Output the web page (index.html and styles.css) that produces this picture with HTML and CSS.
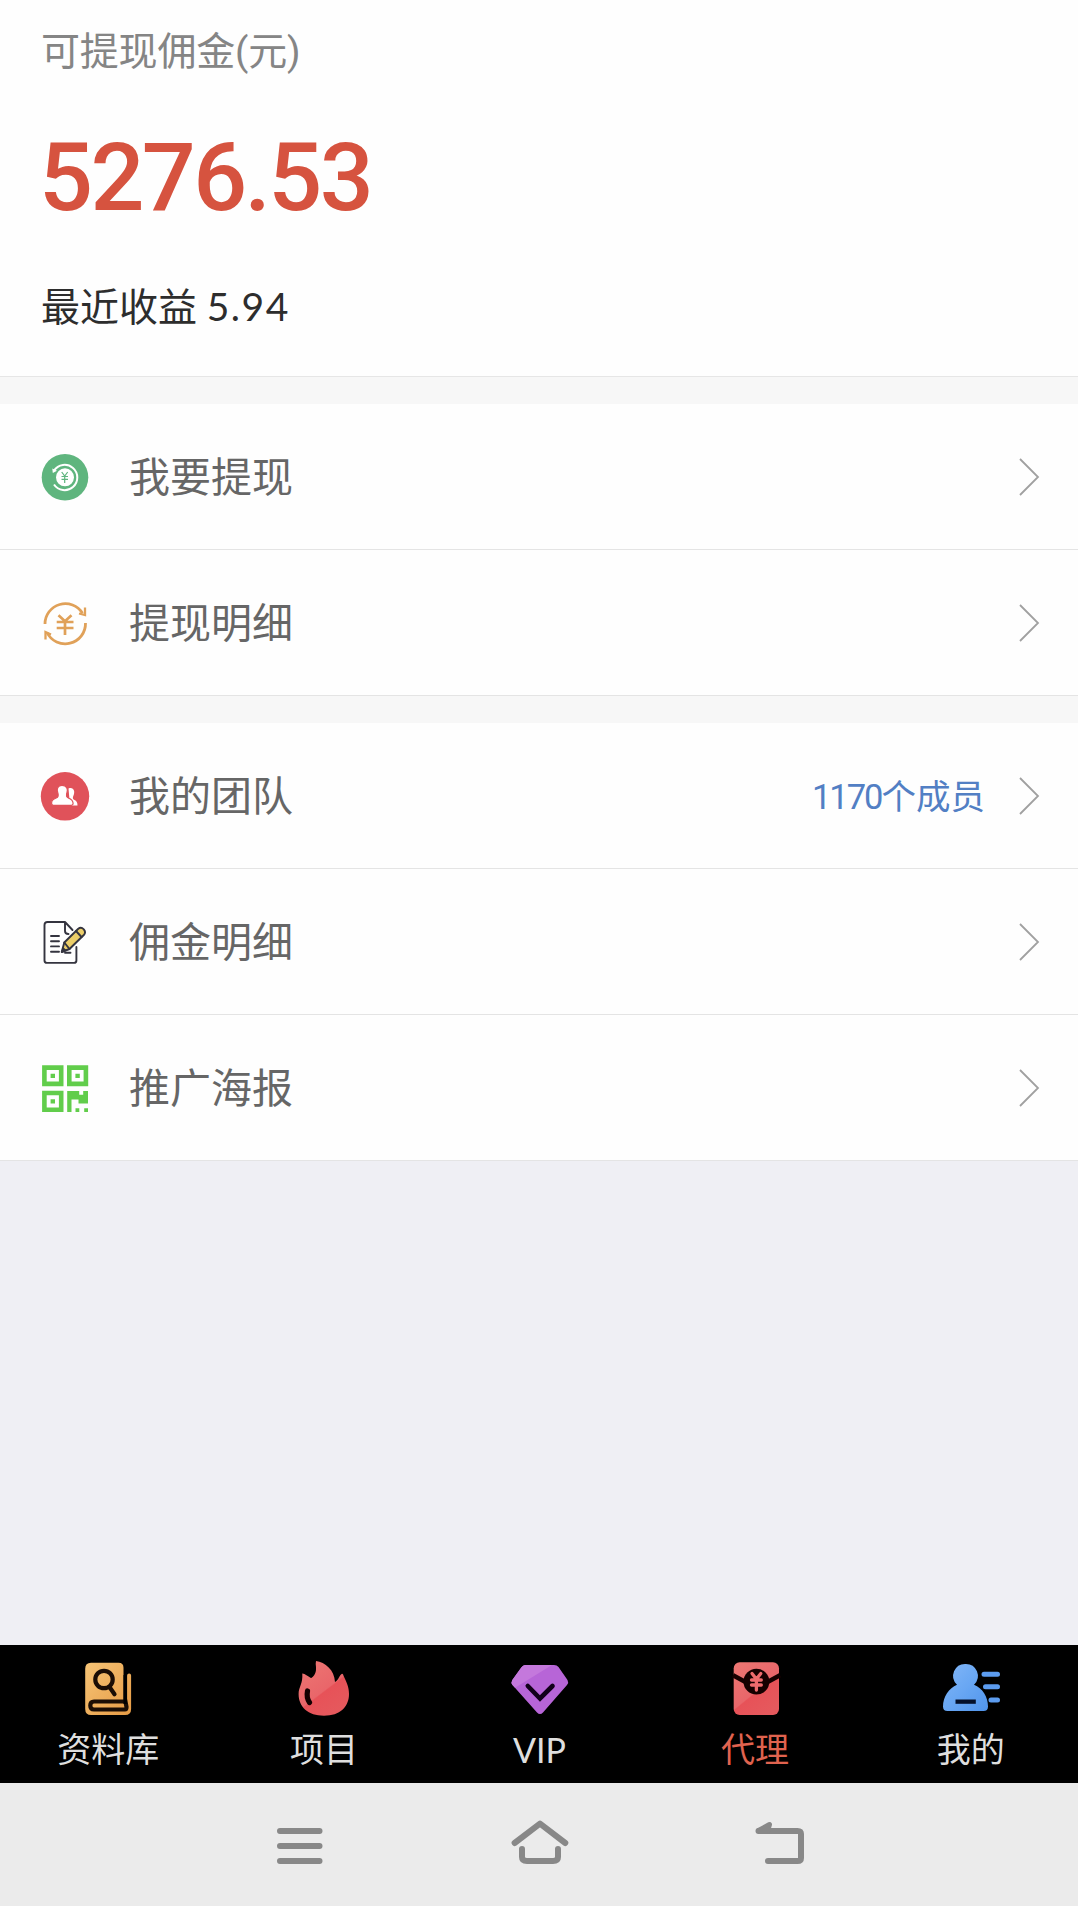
FILE: index.html
```html
<!DOCTYPE html>
<html lang="zh-CN">
  <head>
    <meta charset="UTF-8" />
    <meta name="viewport" content="width=device-width, initial-scale=1.0" />
    <title>代理</title>
    <link rel="stylesheet" href="styles.css">
  </head>
  <body>
    <main class="page">
      <section class="balance">
        <p class="balance-title">可提现佣金(元)</p>
        <p class="balance-amount">5276.53</p>
        <p class="balance-recent">最近收益 <span class="number">5.94</span></p>
      </section>

      <ul class="menu">
        <li class="menu-item">
          <svg class="menu-icon" viewBox="0 0 48 48">
            <circle cx="24" cy="24.3" r="23.3" fill="#5fb57e" />
            <path d="M13 17.500A12.700 12.700 0 1 1 13 31.500" fill="none" stroke="#fff" stroke-width="2" />
            <path d="M11.3 15.500l.5 4.500 4.200-2.200" fill="#fff" />
            <circle cx="24" cy="24.3" r="9" fill="#fff" />
            <path d="M20.7 19l3 4 3-4M23.7 23v7M20.5 23.5h6.5M20.5 26.3h6.5" fill="none" stroke="#5fb57e" stroke-width="1.2" />
          </svg>
          <span class="menu-label">我要提现</span>
          <svg class="chevron" viewBox="0 0 20 38"><path d="M1 1l18 18L1 37" /></svg>
        </li>
        <li class="menu-item">
          <svg class="menu-icon" viewBox="0 0 48 48">
            <g fill="none" stroke="#e0a159" stroke-width="2.8">
              <path d="M4 25A20.300 20.300 0 0 1 41.500 14.200M44.500 24A20.300 20.300 0 0 1 6 33.500" />
              <path d="M44 8.500v7.500l-6-1.500M4.500 40.500V33l5.500 2.500" stroke-width="2.300" />
              <path d="M17.500 16.200l6.500 6 6.500-6M24 22v14M15.7 23h16.8M15.7 29h16.8" stroke-width="2.700" />
            </g>
          </svg>
          <span class="menu-label">提现明细</span>
          <svg class="chevron" viewBox="0 0 20 38"><path d="M1 1l18 18L1 37" /></svg>
        </li>
      </ul>

      <ul class="menu">
        <li class="menu-item">
          <svg class="menu-icon" viewBox="0 0 48 48">
            <circle cx="24" cy="24.300" r="24.2" fill="#e0525a" />
            <path d="M27.500 16.500c5-2 7 3 5 7-1 2-1 3.500 1 4.500 2 1 3 2.500 3 5.500H29z" fill="#fff" />
            <path d="M21 13.300c-4.500 0-5.500 4-4.300 7.200.9 2.500 1.200 4.500-1.500 5.500-3.500 1.200-4.900 2.500-4.600 5.500.1 1 .5 1.500 1.500 1.800h18.500c1-.3 1.500-.8 1.500-1.800 0-3-1.600-4.300-4.800-5.500-2.500-1-2.200-3-1.300-5.500 1.200-3.200-.3-7.200-5-7.200z" fill="#fff" stroke="#e0525a" stroke-width="1.200" />
          </svg>
          <span class="menu-label">我的团队</span>
          <span class="menu-value"><span class="count">1170</span>个成员</span>
          <svg class="chevron" viewBox="0 0 20 38"><path d="M1 1l18 18L1 37" /></svg>
        </li>
        <li class="menu-item">
          <svg class="menu-icon" viewBox="0 0 48 48">
            <g fill="none" stroke="#34343f" stroke-width="1.900" stroke-linecap="round" stroke-linejoin="round">
              <path d="M31.500 12L24 4H6.500Q3.500 4 3.500 7v35.500q0 2.400 2.500 2.400h27q2.400 0 2.400-2.400V29M24 4v9q0 3 3.500 3" />
              <path d="M10 18h8M10 23.300h8M10 28.400h8M10 33.700h8M24 34.800h5.500" />
              <path d="M20.700 34l2.600-9.500L37 11q3-2.500 5.800.3 2.500 3 0 5.700L28.500 31z" fill="#ecce68" />
              <path d="M23.300 24.500l5.200 6.500M35 13l5.500 6M21 34l1.200-3.500 2.300 2z" />
            </g>
          </svg>
          <span class="menu-label">佣金明细</span>
          <svg class="chevron" viewBox="0 0 20 38"><path d="M1 1l18 18L1 37" /></svg>
        </li>
        <li class="menu-item">
          <svg class="menu-icon" viewBox="0 0 48 48">
            <g fill="none" stroke="#61cd4b" stroke-width="4.600">
              <path d="M3.400 3.600h16.800v16.300H3.400zM28.300 3.600h16.600v16.300H28.300zM3.400 29h16.800v16.800H3.400z" />
            </g>
            <path d="M9.600 9.700h4.400v4.400H9.600zM34.400 9.700h4.400v4.400h-4.400zM9.600 35.200h4.400v4.400H9.600zM26.200 27h12v3.800h4V27H47v12.500H37.500v-4h-7V48h-4.300zM34.500 44.200h3.800V48h-3.800zM43.200 44.200H47V48h-3.800z" fill="#61cd4b" />
          </svg>
          <span class="menu-label">推广海报</span>
          <svg class="chevron" viewBox="0 0 20 38"><path d="M1 1l18 18L1 37" /></svg>
        </li>
      </ul>
    </main>

    <nav class="tabbar">
      <a class="tab">
        <svg class="tab-icon" viewBox="0 0 60 60">
          <defs>
            <linearGradient id="gold" x1="0" y1="0" x2="1" y2="1">
              <stop offset="0" stop-color="#f6c476" />
              <stop offset="1" stop-color="#e69b45" />
            </linearGradient>
          </defs>
          <path d="M13 4.700h27.500q5 0 5 5V42h3.600V17.500q0-2 2-2t2 2V51q0 6-6 6H13.200q-6 0-6-6V10.700q0-6 5.800-6z" fill="url(#gold)" />
          <g fill="none" stroke="#1a0d05" stroke-width="4.200" stroke-linecap="round">
            <circle cx="26" cy="21.500" r="8.700" />
            <path d="M31.500 29l5 7.300" />
            <path d="M47.500 43.500H16q-3.700 0-3.700 4t3.700 4h31q1.500 0 1.500-2.500z" />
          </g>
          <path d="M45.500 17h3.500v29h-3.500z" fill="#000" />
        </svg>
        <span class="tab-label">资料库</span>
      </a>
      <a class="tab">
        <svg class="tab-icon" viewBox="0 0 60 60">
          <defs>
            <linearGradient id="red" x1="0" y1="0" x2=".7" y2="1">
              <stop offset="0" stop-color="#ed7773" />
              <stop offset=".6" stop-color="#e9666a" />
              <stop offset=".62" stop-color="#e75258" />
              <stop offset="1" stop-color="#e5595d" />
            </linearGradient>
          </defs>
          <path d="M23 3c9 1 18.500 9 19 21 3.500-1.500 4-6.500 7-8.200 1.300.2 1.300 1.500 2 3 2.500 5.500 5 10 5 17.200C56 49 47 57.700 31 57.700S5.600 49 5.600 36c0-7 4.400-10 3.700-20.500 1.500-.5 7 3.700 9 4.500 5-3.500 5.200-8 4.400-14z" fill="url(#red)" />
          <path d="M14.500 33c-1 5 0 8.500 2 11.500" fill="none" stroke="#120000" stroke-width="5.200" stroke-linecap="round" />
        </svg>
        <span class="tab-label">项目</span>
      </a>
      <a class="tab">
        <svg class="tab-icon" viewBox="0 0 60 60">
          <path d="M16 7h29q3 0 4.500 2l9 13q1.500 2.500-.5 5L34 54.500q-3 3-6 0L3.500 27q-1.800-2.500-.2-5l9-12.500Q14 7 16 7z" fill="#b765d7" />
          <path d="M16 7h27L6 29.700 3.500 27q-1.800-2.500-.2-5l9-12.500Q14 7 16 7z" fill="#c478dc" />
          <path d="M18.800 28L31 40.500l12.500-12.500" fill="none" stroke="#12001a" stroke-width="4.600" stroke-linecap="round" />
        </svg>
        <span class="tab-label tab-vip">VIP</span>
      </a>
      <a class="tab active">
        <svg class="tab-icon" viewBox="0 0 60 60">
          <rect x="8.700" y="4.300" width="45.300" height="52.700" rx="6" fill="url(#red)" />
          <path d="M8 17.200l12 6.500M55 17.200l-12 6.500" fill="none" stroke="#160000" stroke-width="4.500" />
          <circle cx="31.400" cy="23.700" r="12.900" fill="#160000" />
          <path d="M27 15.500l4.400 5.500 4.400-5.500M31.400 21v11M26.500 22h9.800M26.500 27h9.800" fill="none" stroke="#ee6b6d" stroke-width="3.300" stroke-linecap="round" />
        </svg>
        <span class="tab-label">代理</span>
      </a>
      <a class="tab">
        <svg class="tab-icon" viewBox="0 0 60 60">
          <defs>
            <linearGradient id="blue" x1="0" y1="0" x2="1" y2="1">
              <stop offset="0" stop-color="#83b7f7" />
              <stop offset=".5" stop-color="#69a7f3" />
              <stop offset="1" stop-color="#5094eb" />
            </linearGradient>
          </defs>
          <path d="M25.500 5.900a12 12 0 0 1 8.500 20.800C42.500 30 48 39 48 48.500q0 4.500-4.500 4.500H7.500Q3 53 3 48.500C3 39 9 30 17 26.700A12 12 0 0 1 25.500 5.900z" fill="url(#blue)" />
          <path d="M15.500 41.500h20.300v4.300H15.500z" fill="#04102a" />
          <path d="M44 16.300h13.500M45.500 28.700h12M51 42h6.500" stroke="#5c9cef" stroke-width="5" stroke-linecap="round" />
        </svg>
        <span class="tab-label">我的</span>
      </a>
    </nav>

    <footer class="sysbar">
      <svg class="sys-icon" viewBox="0 0 60 60">
        <path d="M10 17h39.500M10 32h39.500M10 47h39.500" />
      </svg>
      <svg class="sys-icon" viewBox="0 0 60 60">
        <path d="M4.600 29L30 9.700 55.300 29M12 35v8q0 4 5 4h26q5 0 5-4v-8" />
      </svg>
      <svg class="sys-icon" viewBox="0 0 60 60">
        <path d="M18 47h29.500q3.500 0 3.500-3V20q0-3-3.500-3H8.500" />
        <path class="sys-arrow" d="M8.500 16.500l11-6-1.800 6z" />
      </svg>
    </footer>
  </body>
</html>
```

FILE: styles.css
```css
* {
  box-sizing: border-box;
}
body {
  display: flex;
  flex-direction: column;
  height: 1906px;
  margin: 0;
  font-family: "Roboto", "Noto Sans CJK SC", sans-serif;
  color: #666;
  background-color: #efeff4;
}
p,
ul {
  margin: 0;
  padding: 0;
  list-style: none;
}
svg {
  display: block;
  flex: none;
  overflow: visible;
}
.page {
  flex: 1;
}

/* balance */
.balance {
  height: 377px;
  padding: 23px 41px 0;
  background-color: #fefefe;
  border-bottom: 1px solid #e6e6e6;
}
.balance-title {
  font-size: 39px;
  line-height: 58px;
  letter-spacing: -0.2px;
  color: #858585;
}
.balance-amount {
  margin-top: 37px;
  margin-left: -2px;
  font-size: 95px;
  font-weight: 500;
  line-height: 120px;
  letter-spacing: -2.6px;
  color: #d6533f;
}
.balance-recent {
  margin-top: 39px;
  font-size: 39px;
  line-height: 58px;
  color: #2d2d2d;
}
.number {
  font-family: "Lato", sans-serif;
  letter-spacing: 1.5px;
}

/* menu */
.menu {
  border-top: 27px solid #f7f7f7;
}
.menu-item {
  display: flex;
  align-items: center;
  height: 146px;
  padding: 0 39px 0 41px;
  background-color: #fefefe;
  border-bottom: 1px solid #e4e4e4;
}
.menu-icon {
  width: 48px;
  height: 48px;
}
.menu-label {
  flex: 1;
  margin-left: 40px;
  padding-top: 2px;
  font-size: 41px;
  line-height: 60px;
}
.menu-value {
  margin-right: 34px;
  padding-bottom: 3px;
  font-size: 34.5px;
  color: #527fc4;
}
.count {
  letter-spacing: -2px;
}
.chevron {
  width: 20px;
  height: 38px;
  fill: none;
  stroke: #a0a0a0;
  stroke-width: 1.8;
}

/* tab bar */
.tabbar {
  display: flex;
  height: 138px;
  background-color: #000;
}
.tab {
  display: flex;
  flex: 1;
  flex-direction: column;
  align-items: center;
  padding-top: 13px;
  color: #dedede;
}
.tab.active {
  color: #e0634f;
}
.tab-icon {
  width: 60px;
  height: 60px;
}
.tab-label {
  margin-top: 7px;
  padding-left: 1px;
  font-size: 34px;
  line-height: 50px;
}
.tab-vip {
  font-family: "Lato", sans-serif;
}

/* system buttons */
.sysbar {
  display: flex;
  justify-content: center;
  gap: 180px;
  height: 123px;
  padding: 31px 0 0 2px;
  background-color: #ebebeb;
}
.sys-icon {
  width: 60px;
  height: 60px;
  fill: none;
  stroke: #888;
  stroke-width: 6;
  stroke-linecap: round;
  stroke-linejoin: round;
}
.sys-arrow {
  fill: #888;
  stroke-width: 5;
}
```
